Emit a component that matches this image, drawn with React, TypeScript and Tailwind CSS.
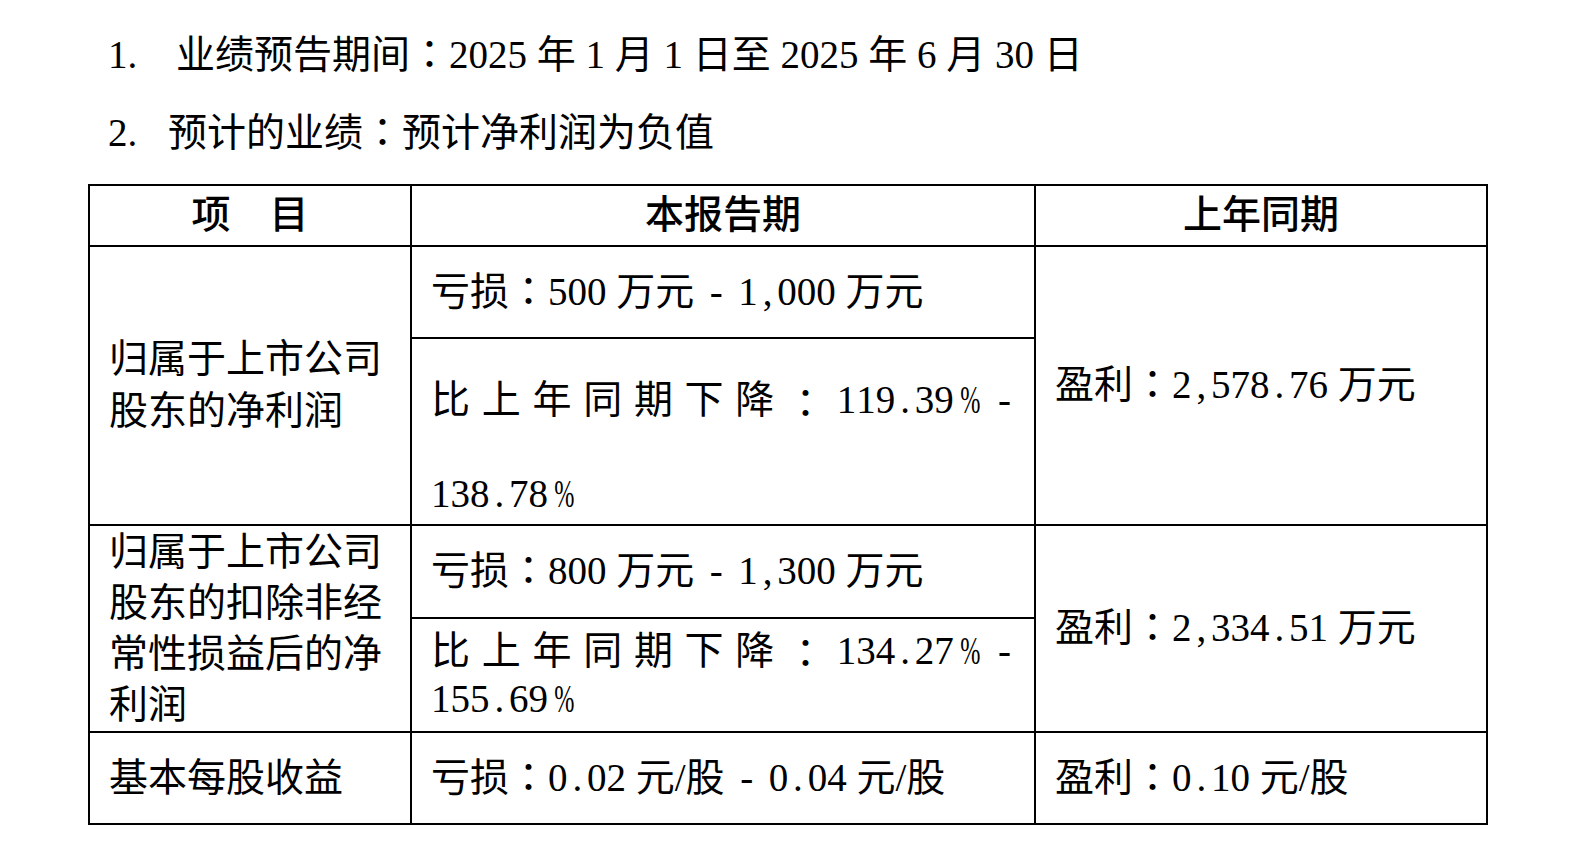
const font = "font-['Liberation_Serif','Noto_Sans_CJK_SC',serif]"

const cell = 'border-2 border-black pl-[19px] pr-[10px] align-middle'

// fullwidth colon, centered in its box like the original Song face
function C() {
  return <span className="font-['Noto_Sans_CJK_TC',sans-serif] leading-none">：</span>
}

function Dash({ w = 'w-[44px]' }: { w?: string }) {
  return <span className={`inline-block text-center ${w}`}>-</span>
}

// half-width monospace figures, as in the Song typeface of the source document
function Num({ v }: { v: string }) {
  return (
    <span className="whitespace-nowrap">
      {v.split('').map((ch, i) =>
        ch === '%' ? (
          <span key={i} className="inline-block w-[0.5em] text-center">
            <span className="inline-block [transform:scaleX(0.62)]">%</span>
          </span>
        ) : (
          <span key={i} className="inline-block w-[0.5em] text-center">
            {ch}
          </span>
        )
      )}
    </span>
  )
}

function Spread({ num, h }: { num: string; h: string }) {
  return (
    <div className={`flex items-center justify-between ${h}`}>
      {['比', '上', '年', '同', '期', '下', '降'].map((p, i) => (
        <span key={i}>{p}</span>
      ))}
      <C />
      <Num v={num} />
      <Dash w="w-[39px]" />
    </div>
  )
}

export default function App() {
  return (
    <div className={`${font} bg-white text-black text-[39px] w-[1594px] h-[868px] overflow-hidden pt-[16px]`}>
      <div className="pl-[108px] whitespace-nowrap">
        <div className="flex items-center h-[78px]">
          <span className="w-[68px]">1.</span>
          <span>
            业绩预告期间<C />2025 年 1 月 1 日至 2025 年 6 月 30 日
          </span>
        </div>
        <div className="flex items-center h-[78px]">
          <span className="w-[60px]">2.</span>
          <span>
            预计的业绩<C />预计净利润为负值
          </span>
        </div>
      </div>

      <table className="ml-[88px] mt-[12px] border-collapse table-fixed w-[1398px]">
        <colgroup>
          <col className="w-[322px]" />
          <col className="w-[624px]" />
          <col className="w-[452px]" />
        </colgroup>
        <tbody>
          <tr>
            <th className="border-2 border-black h-[60px] font-medium text-center">项　目</th>
            <th className="border-2 border-black h-[60px] font-medium text-center">本报告期</th>
            <th className="border-2 border-black h-[60px] font-medium text-center">上年同期</th>
          </tr>

          {/* 净利润 */}
          <tr>
            <td rowSpan={2} className={`${cell} leading-[52px]`}>归属于上市公司股东的净利润</td>
            <td className={`${cell} h-[92px] leading-[50px] whitespace-nowrap`}>
              亏损<C />500 万元<Dash /><Num v="1,000" /> 万元
            </td>
            <td rowSpan={2} className={`${cell} whitespace-nowrap`}>
              盈利<C /><Num v="2,578.76" /> 万元
            </td>
          </tr>
          <tr>
            <td className={`${cell} h-[185px] !align-top`}>
              <Spread num="119.39%" h="h-[124px]" />
              <div className="h-[61px] leading-[61px]">
                <Num v="138.78%" />
              </div>
            </td>
          </tr>

          {/* 扣非净利润 */}
          <tr>
            <td rowSpan={2} className={`${cell} leading-[51px]`}>归属于上市公司股东的扣除非经常性损益后的净利润</td>
            <td className={`${cell} h-[93px] leading-[50px] whitespace-nowrap`}>
              亏损<C />800 万元<Dash /><Num v="1,300" /> 万元
            </td>
            <td rowSpan={2} className={`${cell} whitespace-nowrap`}>
              盈利<C /><Num v="2,334.51" /> 万元
            </td>
          </tr>
          <tr>
            <td className={`${cell} h-[114px] leading-[48px]`}>
              <Spread num="134.27%" h="h-[48px]" />
              <div>
                <Num v="155.69%" />
              </div>
            </td>
          </tr>

          {/* 每股收益 */}
          <tr>
            <td className={`${cell} h-[92px] leading-[50px]`}>基本每股收益</td>
            <td className={`${cell} leading-[50px] whitespace-nowrap`}>
              亏损<C /><Num v="0.02" /> 元/股<Dash /><Num v="0.04" /> 元/股
            </td>
            <td className={`${cell} leading-[50px] whitespace-nowrap`}>
              盈利<C /><Num v="0.10" /> 元/股
            </td>
          </tr>
        </tbody>
      </table>
    </div>
  )
}
